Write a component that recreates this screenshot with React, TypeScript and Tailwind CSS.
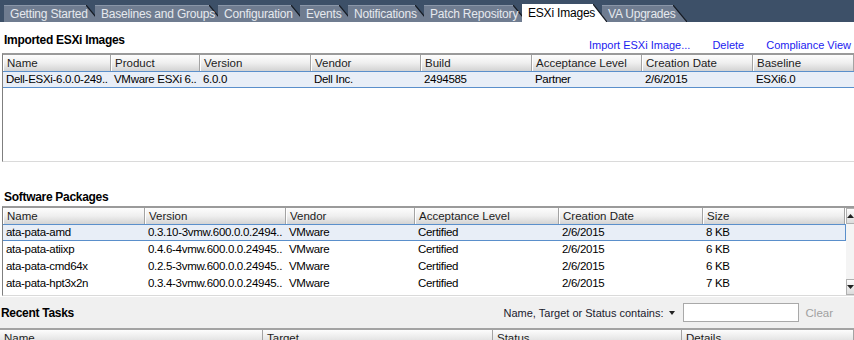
import React from "react";

type Tab = { label: string; w: number; z: string; active?: boolean };

const tabs: Tab[] = [
  { label: "Getting Started", w: 96, z: "z-[1]" },
  { label: "Baselines and Groups", w: 128, z: "z-[2]" },
  { label: "Configuration", w: 87, z: "z-[3]" },
  { label: "Events", w: 53, z: "z-[4]" },
  { label: "Notifications", w: 81, z: "z-[5]" },
  { label: "Patch Repository", w: 103, z: "z-[6]" },
  { label: "ESXi Images", w: 85, z: "z-[50]", active: true },
  { label: "VA Upgrades", w: 85, z: "z-[7]" },
];

function TabBar() {
  return (
    <div className="flex h-[22px] items-end bg-[#3d5068] pl-[4px]">
      {tabs.map((t) => (
        <div
          key={t.label}
          className={`relative -mr-[5px] shrink-0 ${t.z} ${t.active ? "h-[18px]" : "h-[17px]"}`}
          style={{ width: t.w }}
        >
          <div
            className={`absolute inset-0 [clip-path:polygon(0_0,calc(100%_-_14px)_0,100%_100%,0_100%)] ${
              t.active ? "bg-white" : "bg-[#6f7c90] border-t border-[#8a96a8]"
            }`}
          />
          <svg className="absolute right-0 top-0 h-full w-[14px]" viewBox="0 0 14 18" preserveAspectRatio="none">
            <line x1="0" y1="0" x2="14" y2="18" stroke="#151a22" strokeWidth="1.2" />
          </svg>
          <span
            className={`relative block whitespace-nowrap pl-[6px] text-[12px] tracking-[-0.2px] ${
              t.active ? "leading-[19px] text-black" : "leading-[18px] text-[#e6e9ee]"
            }`}
          >
            {t.label}
          </span>
        </div>
      ))}
    </div>
  );
}

function HeaderCell({ w, label, grow }: { w: number; label: string; grow?: boolean }) {
  return (
    <div
      className={`h-[16px] overflow-hidden whitespace-nowrap border-r border-[#a3a3a3] border-l border-l-white bg-linear-to-b from-[#fdfdfd] via-[#efefef] to-[#d3d3d3] pl-[3px] text-[11.5px] leading-[16px] text-[#1c1c1c] ${
        grow ? "flex-1" : "shrink-0"
      }`}
      style={{ width: grow ? undefined : w }}
    >
      {label}
    </div>
  );
}

function Cell({ w, children, grow }: { w: number; children: React.ReactNode; grow?: boolean }) {
  return (
    <div
      className={`overflow-hidden whitespace-nowrap pl-[3px] text-[11.5px] tracking-[-0.3px] leading-[15px] text-black ${grow ? "flex-1" : "shrink-0"}`}
      style={{ width: grow ? undefined : w }}
    >
      {children}
    </div>
  );
}

const t1Cols = [108, 89, 111, 110, 111, 110, 111, 120];
const t1Head = ["Name", "Product", "Version", "Vendor", "Build", "Acceptance Level", "Creation Date", "Baseline"];
const t1Row = ["Dell-ESXi-6.0.0-249..", "VMware ESXi 6..", "6.0.0", "Dell Inc.", "2494585", "Partner", "2/6/2015", "ESXi6.0"];

const t2Cols = [142, 141, 129, 144, 144, 142];
const t2Head = ["Name", "Version", "Vendor", "Acceptance Level", "Creation Date", "Size"];
const t2Rows = [
  ["ata-pata-amd", "0.3.10-3vmw.600.0.0.2494..", "VMware", "Certified", "2/6/2015", "8 KB"],
  ["ata-pata-atiixp", "0.4.6-4vmw.600.0.0.24945..", "VMware", "Certified", "2/6/2015", "6 KB"],
  ["ata-pata-cmd64x", "0.2.5-3vmw.600.0.0.24945..", "VMware", "Certified", "2/6/2015", "6 KB"],
  ["ata-pata-hpt3x2n", "0.3.4-3vmw.600.0.0.24945..", "VMware", "Certified", "2/6/2015", "7 KB"],
];

export default function App() {
  return (
    <div className="h-[340px] w-[854px] overflow-hidden bg-white font-['Liberation_Sans',Arial,sans-serif] text-[12px]">
      <TabBar />

      {/* Imported ESXi Images header */}
      <div className="flex h-[31px] items-start justify-between">
        <div className="pl-[4px] pt-[11px] text-[12px] font-bold tracking-[-0.3px] leading-[14px] text-black">Imported ESXi Images</div>
        <div className="flex gap-[22px] pr-[3px] pt-[16px] text-[11px] leading-[14px] text-[#1c1cf0]">
          <span>Import ESXi Image...</span>
          <span>Delete</span>
          <span>Compliance View</span>
        </div>
      </div>

      {/* Table 1 */}
      <div className="ml-[2px] flex h-[109px] flex-col border-l border-[#7f7f7f] border-t-2 border-t-[#9a9a9a] border-b border-b-[#dadada]">
        <div className="flex shrink-0">
          {t1Head.map((h, i) => (
            <HeaderCell key={h} w={t1Cols[i]} label={h} grow={i === t1Head.length - 1} />
          ))}
        </div>
        <div className="flex h-[17px] shrink-0 items-center border-y border-[#5a8fcb] bg-[#e8eef7]">
          {t1Row.map((c, i) => (
            <Cell key={i} w={t1Cols[i]} grow={i === t1Row.length - 1}>
              {c}
            </Cell>
          ))}
        </div>
        <div className="flex-1" />
      </div>

      {/* Software Packages header */}
      <div className="h-[44px] pl-[4px] pt-[28px] text-[12px] font-bold tracking-[-0.3px] leading-[14px] text-black">Software Packages</div>

      {/* Table 2 */}
      <div className="ml-[2px] flex h-[90px] border-l border-[#7f7f7f] border-t-2 border-t-[#9a9a9a] border-b border-b-[#dadada]">
        <div className="flex w-[843px] shrink-0 flex-col">
          <div className="flex shrink-0">
            {t2Head.map((h, i) => (
              <HeaderCell key={h} w={t2Cols[i]} label={h} />
            ))}
          </div>
          {t2Rows.map((r, ri) => (
            <div
              key={ri}
              className={`flex h-[17px] shrink-0 items-center ${
                ri === 0 ? "border border-l-0 border-[#5a8fcb] bg-[#e8eef7]" : ""
              }`}
            >
              {r.map((c, i) => (
                <Cell key={i} w={t2Cols[i]}>
                  {c}
                </Cell>
              ))}
            </div>
          ))}
        </div>
        {/* scrollbar */}
        <div className="flex flex-1 flex-col bg-[#f4f4f4] bg-[radial-gradient(#dcdcdc_0.6px,transparent_0.6px)] bg-[length:2px_2px]">
          <div className="flex h-[16px] shrink-0 items-center justify-center border border-[#b0b0b0] bg-linear-to-b from-[#fdfdfd] to-[#dcdcdc]">
            <svg width="7" height="4" viewBox="0 0 7 4">
              <path d="M0 4 L3.5 0 L7 4 Z" fill="#222" />
            </svg>
          </div>
          <div className="flex-1" />
          <div className="flex h-[16px] shrink-0 items-center justify-center border border-[#b0b0b0] bg-linear-to-b from-[#fdfdfd] to-[#dcdcdc]">
            <svg width="7" height="4" viewBox="0 0 7 4">
              <path d="M0 0 L3.5 4 L7 0 Z" fill="#222" />
            </svg>
          </div>
        </div>
      </div>

      {/* Recent Tasks */}
      <div className="flex h-[60px] flex-col border-t border-white bg-[#f0f0f0]">
        <div className="flex h-[31px] shrink-0 items-center">
          <div className="pl-[1px] text-[12px] font-bold tracking-[-0.3px] leading-[14px] text-black">Recent Tasks</div>
          <div className="ml-auto flex items-center">
            <span className="text-[11px] leading-[14px] text-[#1a1a2e]">Name, Target or Status contains:</span>
            <svg className="ml-[5px]" width="6" height="4" viewBox="0 0 6 4">
              <path d="M0 0 L3 4 L6 0 Z" fill="#222" />
            </svg>
            <div className="ml-[8px] h-[19px] w-[116px] border border-[#a9a9a9] bg-white" />
            <span className="ml-[7px] mr-[21px] text-[11.5px] leading-[14px] text-[#a0a0a0]">Clear</span>
          </div>
        </div>
        <div className="flex shrink-0 border-t-2 border-[#a3a3a3]">
          {[
            ["Name", 263],
            ["Target", 230],
            ["Status", 189],
            ["Details", 172],
          ].map(([l, w]) => (
            <div
              key={l as string}
              className="h-[16px] shrink-0 border-r border-[#a3a3a3] bg-linear-to-b from-[#fdfdfd] to-[#d6d6d6] pl-[4px] text-[11.5px] leading-[16px] text-[#1c1c1c]"
              style={{ width: w as number }}
            >
              {l}
            </div>
          ))}
        </div>
      </div>
    </div>
  );
}
